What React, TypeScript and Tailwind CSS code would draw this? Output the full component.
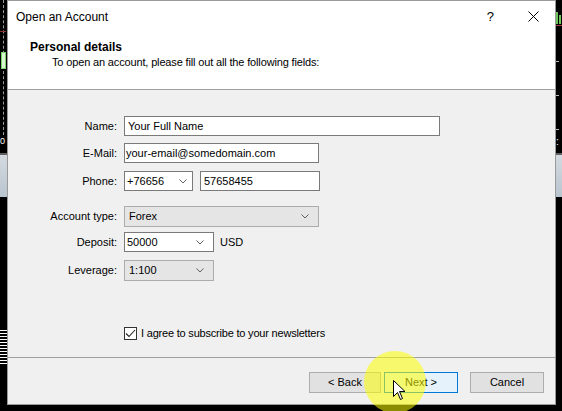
import React from "react";

const Chevron = () => (
  <svg width="8" height="5" viewBox="0 0 8 5" className="shrink-0">
    <path d="M0.5 0.5 L4 4 L7.5 0.5" fill="none" stroke="#606060" strokeWidth="1" />
  </svg>
);

const font = { fontFamily: '"Liberation Sans", Arial, sans-serif' };

function Label({ children }: { children: React.ReactNode }) {
  return <div className="w-[109px] pr-[0px] text-right text-[11px] text-[#000] leading-none">{children}</div>;
}

export default function App() {
  return (
    <div className="relative w-[562px] h-[411px] bg-black overflow-hidden" style={font}>
      {/* background chart decorations */}
      <div className="absolute left-[3px] top-0 h-[135px] w-0 border-l border-dashed border-[#9a9a9a]" />
      <div className="absolute left-[1px] top-[52px] h-[17px] w-[5px] border border-[#7fd06f] bg-[#d8f5d0]" />
      <div className="absolute left-[0px] top-[31px] h-[1px] w-[6px] bg-[#8a3030]" />
      <div className="absolute left-[0px] top-[137px] text-[9px] text-white leading-none">0</div>
      <div className="absolute left-0 top-[153px] h-[44px] w-[7px] bg-gradient-to-b from-[#d4dae0] to-[#b8c4cf] border-t-[2px] border-[#606060]" />
      <div className="absolute left-0 top-[330px] h-[36px] w-[7px] bg-[repeating-linear-gradient(to_bottom,#ffffff_0px,#ffffff_1px,#000000_1px,#000000_3px)]" />
      <div className="absolute left-[556px] top-[12px] h-[12px] w-[2px] bg-[#6cc45a]" />
      <div className="absolute left-[559px] top-[15px] h-[9px] w-[2px] bg-[#6cc45a]" />
      <div className="absolute left-[556px] top-[25px] h-[1px] w-[6px] bg-[#a04040]" />
      <div className="absolute left-[556px] top-[61px] h-[1px] w-[3px] bg-[#bbbbbb]" />
      <div className="absolute left-[556px] top-[95px] h-[1px] w-[3px] bg-[#bbbbbb]" />
      <div className="absolute left-[556px] top-[129px] h-[1px] w-[3px] bg-[#bbbbbb]" />
      <div className="absolute left-[556px] top-[137px] text-[10px] text-white leading-none">:</div>
      <div className="absolute left-[555px] top-[153px] h-[44px] w-[7px] bg-gradient-to-b from-[#d4dae0] to-[#b8c4cf] border-t-[2px] border-[#606060]" />

      {/* dialog */}
      <div className="relative ml-[7px] w-[549px] h-[405px] border border-[#9a9a9a] bg-[#f0f0f0] flex flex-col">
        {/* header */}
        <div className="h-[88px] bg-white flex flex-col">
          <div className="flex items-center h-[31px] pl-[8px]">
            <span className="text-[12px] text-black">Open an Account</span>
            <span className="ml-auto text-[13px] text-black mr-[34px]">?</span>
            <svg width="11" height="11" viewBox="0 0 11 11" className="mr-[16px]">
              <path d="M0.5 0.5 L10.5 10.5 M10.5 0.5 L0.5 10.5" stroke="#000" strokeWidth="1" />
            </svg>
          </div>
          <div className="pl-[22px] mt-[9px] text-[12px] font-bold text-black leading-none">Personal details</div>
          <div className="pl-[44px] mt-[4px] text-[11px] text-black leading-none tracking-[-0.15px]">
            To open an account, please fill out all the following fields:
          </div>
        </div>
        <div className="h-[1px] bg-[#a0a0a0]" />
        {/* body */}
        <div className="flex-1 flex flex-col pt-[26px]">
          <div className="flex items-center gap-[7px] h-[20px]">
            <Label>Name:</Label>
            <div className="w-[316px] h-[20px] bg-white border border-[#7a7a7a] flex items-center px-[3px] text-[11px]">Your Full Name</div>
          </div>
          <div className="flex items-center gap-[7px] h-[20px] mt-[7px]">
            <Label>E-Mail:</Label>
            <div className="w-[195px] h-[20px] bg-white border border-[#7a7a7a] flex items-center px-[1px] text-[11px]">your-email@somedomain.com</div>
          </div>
          <div className="flex items-center gap-[7px] h-[20px] mt-[8px]">
            <Label>Phone:</Label>
            <div className="w-[69px] h-[20px] bg-white border border-[#7a7a7a] flex items-center pl-[2px] pr-[5px] text-[11px]">
              <span className="flex-1">+76656</span>
              <Chevron />
            </div>
            <div className="w-[120px] h-[20px] bg-white border border-[#7a7a7a] flex items-center px-[3px] text-[11px]">57658455</div>
          </div>

          <div className="flex items-center gap-[7px] h-[21px] mt-[15px]">
            <Label>Account type:</Label>
            <div className="w-[195px] h-[21px] bg-[#e5e5e5] border border-[#acacac] flex items-center pl-[4px] pr-[9px] text-[11px]">
              <span className="flex-1">Forex</span>
              <Chevron />
            </div>
          </div>
          <div className="flex items-center gap-[7px] h-[20px] mt-[5px]">
            <Label>Deposit:</Label>
            <div className="w-[90px] h-[20px] bg-white border border-[#7a7a7a] flex items-center pl-[2px] pr-[9px] text-[11px]">
              <span className="flex-1">50000</span>
              <Chevron />
            </div>
            <span className="ml-[-1px] text-[11px]">USD</span>
          </div>
          <div className="flex items-center gap-[7px] h-[21px] mt-[8px]">
            <Label>Leverage:</Label>
            <div className="w-[90px] h-[21px] bg-[#e5e5e5] border border-[#acacac] flex items-center pl-[4px] pr-[9px] text-[11px]">
              <span className="flex-1">1:100</span>
              <Chevron />
            </div>
          </div>

          <div className="flex items-center h-[14px] mt-[45px] pl-[116px]">
            <div className="w-[13px] h-[13px] bg-white border border-[#333] flex items-center justify-center">
              <svg width="11" height="9" viewBox="0 0 11 9">
                <path d="M1 4.5 L4 7.5 L10 1" fill="none" stroke="#222" strokeWidth="1.1" />
              </svg>
            </div>
            <span className="ml-[4px] text-[11px] tracking-[-0.2px]">I agree to subscribe to your newsletters</span>
          </div>
        </div>
        <div className="h-[1px] bg-[#a0a0a0]" />
        {/* footer */}
        <div className="h-[46px] flex items-start justify-end pt-[14px] pr-[11px]">
          <button className="w-[72px] h-[21px] bg-[#e1e1e1] border border-[#adadad] text-[11px] text-black">&lt; Back</button>
          <button className="ml-[3px] w-[74px] h-[21px] bg-[#e5f1fb] border border-[#0078d7] text-[11px] text-black">Next &gt;</button>
          <button className="ml-[12px] w-[74px] h-[21px] bg-[#e1e1e1] border border-[#adadad] text-[11px] text-black">Cancel</button>
        </div>
      </div>

      {/* highlight + cursor */}
      <div className="absolute left-[364px] top-[351px] w-[62px] h-[62px] rounded-full bg-[rgba(255,255,0,0.55)] pointer-events-none" />
      <svg className="absolute left-[393px] top-[380px]" width="13" height="21" viewBox="0 0 13 21">
        <path d="M0.5 0.5 L0.5 16.5 L4.5 12.5 L7.5 19.5 L9.5 18.5 L6.5 11.5 L12 11.5 Z" fill="#fff" stroke="#000" strokeWidth="1" />
      </svg>
    </div>
  );
}
